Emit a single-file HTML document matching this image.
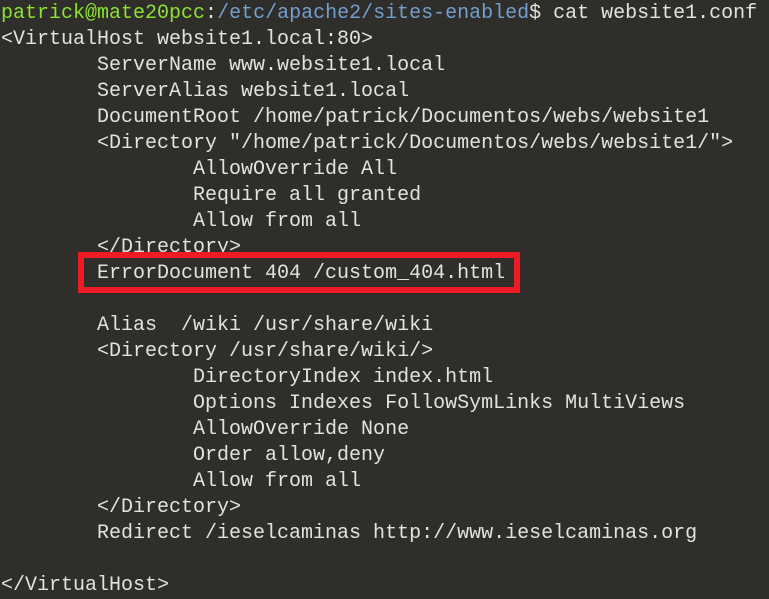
<!DOCTYPE html>
<html><head><style>
html,body{margin:0;padding:0;background:#2f2e2a;width:769px;height:593px;overflow:hidden}
pre{margin:0;position:absolute;left:1px;top:1px;font-family:"Liberation Mono",monospace;font-size:20px;line-height:26px;color:#e2e2de}
.g{color:#8ae234}.b{color:#729fcf}
.box{position:absolute;left:78px;top:252px;width:430px;height:29px;border:6px solid #ed1c24}
</style></head><body>
<pre><span class="g">patrick@mate20pcc</span>:<span class="b">/etc/apache2/sites-enabled</span>$ cat website1.conf
&lt;VirtualHost website1.local:80&gt;
        ServerName www.website1.local
        ServerAlias website1.local
        DocumentRoot /home/patrick/Documentos/webs/website1
        &lt;Directory "/home/patrick/Documentos/webs/website1/"&gt;
                AllowOverride All
                Require all granted
                Allow from all
        &lt;/Directory&gt;
        ErrorDocument 404 /custom_404.html

        Alias  /wiki /usr/share/wiki
        &lt;Directory /usr/share/wiki/&gt;
                DirectoryIndex index.html
                Options Indexes FollowSymLinks MultiViews
                AllowOverride None
                Order allow,deny
                Allow from all
        &lt;/Directory&gt;
        Redirect /ieselcaminas http://www.ieselcaminas.org

&lt;/VirtualHost&gt;</pre>
<div class="box"></div>
</body></html>
